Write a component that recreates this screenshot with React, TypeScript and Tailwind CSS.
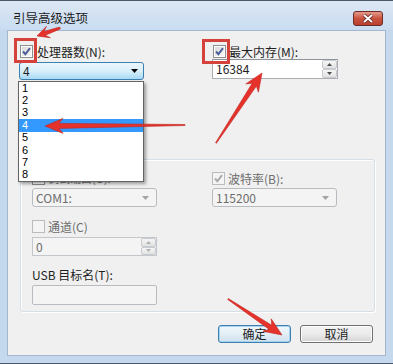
import React from "react";

const fontCjk = "font-['Noto_Sans_CJK_SC','Noto_Sans',sans-serif]";

function arrowPoints(x1: number, y1: number, x2: number, y2: number, hl: number, hw: number, sw: number, tw: number) {
  const dx = x2 - x1;
  const dy = y2 - y1;
  const len = Math.sqrt(dx * dx + dy * dy);
  const ux = dx / len;
  const uy = dy / len;
  const nx = -uy;
  const ny = ux;
  const bx = x2 - ux * hl;
  const by = y2 - uy * hl;
  const jx = bx + ux * 4;
  const jy = by + uy * 4;
  const p = (x: number, y: number) => `${x.toFixed(1)},${y.toFixed(1)}`;
  return [
    p(x1 + nx * tw / 2, y1 + ny * tw / 2),
    p(jx + nx * sw / 2, jy + ny * sw / 2),
    p(bx + nx * hw / 2, by + ny * hw / 2),
    p(x2, y2),
    p(bx - nx * hw / 2, by - ny * hw / 2),
    p(jx - nx * sw / 2, jy - ny * sw / 2),
    p(x1 - nx * tw / 2, y1 - ny * tw / 2),
  ].join(" ");
}

function CheckBox({ checked, disabled }: { checked?: boolean; disabled?: boolean }) {
  return (
    <span
      className={`relative flex h-[13px] w-[13px] shrink-0 items-center justify-center border ${
        disabled ? "border-[#bcbcbc] bg-[#f4f4f4]" : "border-[#8e8f8f] bg-white"
      }`}
    >
      <span
        className={`absolute inset-[1px] ${
          disabled ? "bg-[#f4f4f4]" : "bg-linear-to-br from-[#d8d8d8] to-[#f8f8f8]"
        }`}
      />
      {checked && (
        <svg width="11" height="11" viewBox="0 0 11 11" className="relative">
          <path
            d="M2 5.5 L4.4 8.2 L9 2.2"
            fill="none"
            stroke={disabled ? "#a9a9a9" : "#4a5f97"}
            strokeWidth="1.9"
          />
        </svg>
      )}
    </span>
  );
}

function ComboArrow({ disabled }: { disabled?: boolean }) {
  return (
    <svg width="7" height="4" viewBox="0 0 7 4">
      <path d="M0 0 H7 L3.5 4 Z" fill={disabled ? "#a4a4a4" : "#000"} />
    </svg>
  );
}

function SpinButtons({ disabled }: { disabled?: boolean }) {
  const c = disabled ? "#b0b0b0" : "#4d4d4d";
  return (
    <div className="flex h-full w-[15px] flex-col">
      <div className="flex flex-1 items-center justify-center rounded-[2px] border border-[#c8cbcf] bg-linear-to-b from-[#f6f6f6] to-[#e2e2e2]">
        <svg width="5" height="3" viewBox="0 0 5 3">
          <path d="M0 3 H5 L2.5 0 Z" fill={c} />
        </svg>
      </div>
      <div className="flex flex-1 items-center justify-center rounded-[2px] border border-[#c8cbcf] bg-linear-to-b from-[#f6f6f6] to-[#e2e2e2]">
        <svg width="5" height="3" viewBox="0 0 5 3">
          <path d="M0 0 H5 L2.5 3 Z" fill={c} />
        </svg>
      </div>
    </div>
  );
}

function DisabledCombo({ value }: { value: string }) {
  return (
    <div className="flex h-[19px] w-[125px] items-center justify-between rounded-[3px] border border-[#b8bcc0] bg-[#f4f4f4] pl-[3px] pr-[7px] text-[12px] text-[#6d6d6d]">
      <span>{value}</span>
      <ComboArrow disabled />
    </div>
  );
}

export default function App() {
  const items = ["1", "2", "3", "4", "5", "6", "7", "8"];
  return (
    <div className={`relative h-[364px] w-[393px] overflow-hidden border-b border-t border-[#4a5a6c] bg-[#c4d8ee] ${fontCjk}`}>
      {/* title bar */}
      <div className="flex h-[29px] items-start justify-between bg-linear-to-b from-[#dce7f4] to-[#c9dcf1] pl-[13px] pr-[10px]">
        <span className="mt-[9px] text-[12.5px] leading-[16px] text-[#1b1b1b]">引导高级选项</span>
        <div className="mt-[10px] flex h-[15px] w-[30px] items-center justify-center rounded-[3px] border border-[#6e2a24] bg-linear-to-b from-[#e59a8c] via-[#c8523f] to-[#b8402e]">
          <svg width="12" height="9" viewBox="0 0 12 9">
            <path d="M2 1 L10 8 M10 1 L2 8" stroke="#5a1c16" strokeWidth="3.4" />
            <path d="M2 1 L10 8 M10 1 L2 8" stroke="#ffffff" strokeWidth="2" />
          </svg>
        </div>
      </div>

      {/* client area */}
      <div className="ml-[7px] h-[326px] w-[379px] border border-[#a3b6cd] bg-[#f0f0f0] text-[12px] text-[#1e1e1e]">
        {/* top section */}
        <div className="flex h-[128px]">
          <div className="ml-[11px] flex w-[126px] flex-col">
            <div className="ml-[1px] mt-[14px] flex h-[13px] items-center gap-[4px]">
              <CheckBox checked />
              <span className="leading-none">处理器数(N):</span>
            </div>
            <div className="mt-[4px] flex h-[18px] w-[125px] items-center justify-between rounded-[3px] border border-[#3c7fb1] bg-linear-to-b from-[#eaf6fd] via-[#d9f0fc] to-[#a7d9f5] pl-[3px] pr-[5px]">
              <span className="leading-none">4</span>
              <ComboArrow />
            </div>
          </div>
          <div className="ml-[67px] flex w-[126px] flex-col">
            <div className="ml-[1px] mt-[14px] flex h-[13px] items-center gap-[3px]">
              <CheckBox checked />
              <span className="leading-none">最大内存(M):</span>
            </div>
            <div className="mt-[1px] flex h-[20px] w-[126px] items-stretch border border-[#abadb3] border-t-[#8e9299] bg-white">
              <span className="flex flex-1 items-center pl-[3px] leading-none">16384</span>
              <SpinButtons />
            </div>
          </div>
        </div>

        {/* group box */}
        <div className="ml-[12px] flex h-[153px] w-[355px] rounded-[3px] border border-[#d5dfe5] shadow-[inset_1px_1px_0_#ffffff,1px_1px_0_#ffffff] text-[#6d6d6d]">
          <div className="ml-[11px] flex w-[125px] flex-col">
            <div className="mt-[12px] flex h-[13px] items-center gap-[3px]">
              <CheckBox />
              <span className="whitespace-nowrap text-[11px] leading-none">调试端口(O):</span>
            </div>
            <div className="mt-[3px]">
              <DisabledCombo value="COM1:" />
            </div>
            <div className="mt-[13px] flex h-[13px] items-center gap-[3px]">
              <CheckBox disabled />
              <span className="leading-none">通道(C)</span>
            </div>
            <div className="mt-[4px] flex h-[19px] w-[125px] items-stretch border border-[#c3c6ca] bg-[#f4f4f4]">
              <span className="flex flex-1 items-center pl-[3px] leading-none">0</span>
              <SpinButtons disabled />
            </div>
            <div className="mt-[11px] flex h-[15px] items-center leading-none text-[#1e1e1e]">USB 目标名(T):</div>
            <div className="mt-[3px] h-[20px] w-[125px] rounded-[2px] border border-[#b8bcc0] bg-[#f4f4f4]" />
          </div>
          <div className="ml-[55px] flex w-[125px] flex-col">
            <div className="mt-[12px] flex h-[13px] items-center gap-[3px]">
              <CheckBox checked disabled />
              <span className="leading-none">波特率(B):</span>
            </div>
            <div className="mt-[3px]">
              <DisabledCombo value="115200" />
            </div>
          </div>
        </div>

        {/* buttons */}
        <div className="mt-[13px] flex gap-[9px] pl-[210px]">
          <div className="flex h-[18px] w-[73px] items-center justify-center rounded-[3px] border border-[#3c7fb1] bg-linear-to-b from-[#f2f8fc] via-[#e3eef6] to-[#cfe1ee] shadow-[inset_0_0_0_1px_#a6d4ef] leading-none">
            确定
          </div>
          <div className="flex h-[18px] w-[73px] items-center justify-center rounded-[3px] border border-[#707070] bg-linear-to-b from-[#f2f2f2] via-[#ebebeb] to-[#d4d4d4] shadow-[inset_0_0_0_1px_#fcfcfc] leading-none">
            取消
          </div>
        </div>
      </div>

      {/* open dropdown list */}
      <div className="absolute left-[18px] top-[80px] flex h-[101px] w-[126px] flex-col overflow-hidden border border-[#646464] bg-white shadow-[2px_2px_3px_rgba(0,0,0,0.35)] font-['Liberation_Sans',sans-serif] text-[11px] text-black">
        {items.map((n) => (
          <div
            key={n}
            className={`flex h-[12.375px] shrink-0 items-center overflow-hidden pl-[3px] leading-[11px] ${n === "4" ? "bg-[#3399ff] text-white" : ""}`}
          >
            {n}
          </div>
        ))}
      </div>

      {/* red highlight boxes */}
      <div className="absolute left-[14px] top-[37px] h-[25px] w-[23px] border-[3px] border-[#d5423c]" />
      <div className="absolute left-[202px] top-[38px] h-[25px] w-[28px] border-[3px] border-[#d5423c]" />

      {/* red arrows */}
      <svg className="pointer-events-none absolute left-0 top-0" width="393" height="364" viewBox="0 0 393 364">
        <g fill="#e5332c" stroke="#c0241e" strokeWidth="0.6">
          <polygon points={arrowPoints(60, 27, 37, 35, 12, 12, 4, 2)} />
          <polygon points={arrowPoints(185, 124, 45, 125, 18, 15, 5, 1)} />
          <polygon points={arrowPoints(216, 142, 262, 72, 18, 15, 5, 1)} />
          <polygon points={arrowPoints(228, 298, 282, 334, 18, 15, 5, 1)} />
        </g>
      </svg>
    </div>
  );
}
